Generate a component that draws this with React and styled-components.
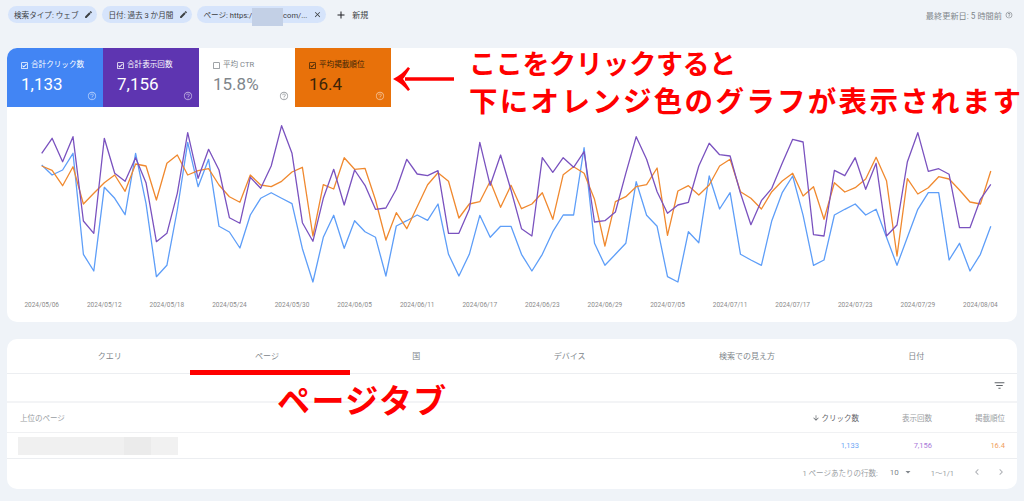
import React from "react";
import styled, { createGlobalStyle } from "styled-components";
import {
  MdEdit,
  MdClose,
  MdAdd,
  MdHelpOutline,
  MdOutlineCheckBox,
  MdOutlineCheckBoxOutlineBlank,
  MdFilterList,
  MdArrowDownward,
  MdArrowDropDown,
  MdChevronLeft,
  MdChevronRight,
} from "react-icons/md";

const FONT = `Roboto, "Noto Sans CJK JP", sans-serif`;

// daily values, already in chart pixels (zoomed by 3 from the plot top)
const CLICKS = [165,195,180,130,433,483,232,265,314,130,280,500,466,300,97,230,148,349,366,414,315,265,248,265,281,416,516,382,316,415,332,365,382,498,348,332,315,331,282,433,498,433,316,382,349,349,433,483,433,365,315,315,113,400,466,433,400,215,316,349,500,516,365,398,198,297,248,433,450,466,332,248,198,316,466,450,315,298,282,315,298,382,466,382,298,248,248,450,400,483,433,349];
const IMPRESSIONS = [130,85,155,80,333,370,85,190,214,143,218,395,370,250,68,205,118,180,323,340,202,235,168,47,130,338,394,265,178,285,180,226,298,294,238,148,192,197,182,370,370,298,97,226,135,240,356,378,143,187,143,172,125,336,332,306,190,80,148,245,310,285,277,168,100,134,138,250,344,272,235,160,88,96,374,378,181,197,143,238,160,378,345,155,68,184,176,193,353,353,268,223];
const POSITION = [168,181,227,170,282,250,218,195,244,162,168,270,160,135,195,182,176,225,260,277,195,225,230,214,186,172,378,224,237,143,178,175,270,390,308,356,290,224,188,214,324,282,275,214,292,226,296,282,248,328,194,170,190,268,408,275,260,230,224,174,376,243,227,255,225,168,148,245,265,297,245,213,190,258,230,328,218,246,233,207,142,212,438,206,252,233,200,207,240,276,282,183];

const DATES = ["2024/05/06","2024/05/12","2024/05/18","2024/05/24","2024/05/30","2024/06/05","2024/06/11","2024/06/17","2024/06/23","2024/06/29","2024/07/05","2024/07/11","2024/07/17","2024/07/23","2024/07/29","2024/08/04"];

const STEP = 10.43;
const toPoints = (values) =>
  values.map((v, i) => `${(41.7 + STEP * i).toFixed(1)},${(110 + v / 3).toFixed(1)}`).join(" ");

const METRICS = [
  { label: "合計クリック数", value: "1,133", bg: "#4285f4", fg: "#fff", soft: "rgba(255,255,255,.55)", checked: true },
  { label: "合計表示回数", value: "7,156", bg: "#5e35b1", fg: "#fff", soft: "rgba(255,255,255,.55)", checked: true },
  { label: "平均 CTR", value: "15.8%", bg: "#fff", fg: "#80868b", soft: "#a0a4a8", checked: false },
  { label: "平均掲載順位", value: "16.4", bg: "#e8710a", fg: "#3c2408", soft: "rgba(255,255,255,.5)", checked: true },
];

const TABS = ["クエリ", "ページ", "国", "デバイス", "検索での見え方", "日付"];

const App = () => (
  <Page>
    <GlobalStyle />
    <Toolbar>
      <Chip>
        検索タイプ: ウェブ
        <MdEdit size={9} color="#3c4043" />
      </Chip>
      <Chip>
        日付: 過去 3 か月間
        <MdEdit size={9} color="#3c4043" />
      </Chip>
      <Chip>
        <span>
          ページ: https:/
          <HiddenUrl />
          com/...
        </span>
        <MdClose size={9} color="#3c4043" />
      </Chip>
      <NewFilter>
        <MdAdd size={12} color="#202124" />
        新規
      </NewFilter>
      <Updated>
        最終更新日: 5 時間前
        <MdHelpOutline size={8} />
      </Updated>
    </Toolbar>

    <ChartCard>
      <Tiles>
        {METRICS.map((m) => (
          <Tile key={m.label} $bg={m.bg} $fg={m.fg}>
            <TileLabel>
              {m.checked ? (
                <MdOutlineCheckBox size={9} />
              ) : (
                <MdOutlineCheckBoxOutlineBlank size={9} />
              )}
              {m.label}
            </TileLabel>
            <TileValue>{m.value}</TileValue>
            <TileHelp $soft={m.soft}>
              <MdHelpOutline size={10} />
            </TileHelp>
          </Tile>
        ))}
      </Tiles>
      <Chart viewBox="7 107 1010 215">
        <polyline points={toPoints(CLICKS)} stroke="#5e9ef8" />
        <polyline points={toPoints(POSITION)} stroke="#f0892f" />
        <polyline points={toPoints(IMPRESSIONS)} stroke="#7a52bf" />
        {DATES.map((d, i) => (
          <AxisLabel key={d} x={41.7 + STEP * 6 * i} y={307}>
            {d}
          </AxisLabel>
        ))}
      </Chart>
    </ChartCard>

    <TableCard>
      <TabBar>
        {TABS.map((t) => (
          <Tab key={t}>{t}</Tab>
        ))}
      </TabBar>
      <FilterRow>
        <MdFilterList size={13} color="#5f6368" />
      </FilterRow>
      <HeadRow>
        <span>上位のページ</span>
        <SortedHead>
          <MdArrowDownward size={8} />
          クリック数
        </SortedHead>
        <NumHead>表示回数</NumHead>
        <NumHead>掲載順位</NumHead>
      </HeadRow>
      <BodyRow>
        <BlurredUrl />
        <Num $color="#6ba5f5">1,133</Num>
        <Num $color="#a878d8">7,156</Num>
        <Num $color="#f0a060">16.4</Num>
      </BodyRow>
      <Pagination>
        <span>1 ページあたりの行数:</span>
        <PageSize>
          10
          <MdArrowDropDown size={12} />
        </PageSize>
        <PageRange>1〜1/1</PageRange>
        <PageArrows>
          <MdChevronLeft size={12} />
          <MdChevronRight size={12} />
        </PageArrows>
      </Pagination>
    </TableCard>

    {/* red notes written on top of the report */}
    <NoteArrow width="62" height="26" viewBox="0 0 62 26">
      <path d="M61 11.2H12V14.8H61Z" fill="#f00" />
      <path d="M0 13C6 10 11 6 15 1L17 2.5C14 7 12 10.5 10 13C12 15.5 14 19 17 23.5L15 25C11 20 6 16 0 13Z" fill="#f00" />
    </NoteArrow>
    <ClickNote>
      <NoteLine $size={27} $spacing={-0.3}>ここをクリックすると</NoteLine>
      <NoteLine $size={28.5} $spacing={2.3}>下にオレンジ色のグラフが表示されます</NoteLine>
    </ClickNote>
    <TabUnderline />
    <TabNote>ページタブ</TabNote>
  </Page>
);

const GlobalStyle = createGlobalStyle`
  html, body {
    margin: 0;
    background: #eff3f8;
    font-family: ${FONT};
  }
`;

const Page = styled.div`
  position: relative;
  box-sizing: border-box;
  width: 1024px;
  height: 501px;
  overflow: hidden;
  padding: 6px 7px 0 7px;
  display: flex;
  flex-direction: column;
`;

const Toolbar = styled.div`
  display: flex;
  align-items: center;
  gap: 5px;
  height: 17px;
  padding-left: 1px;
`;

const Chip = styled.div`
  display: flex;
  align-items: center;
  gap: 6px;
  height: 17px;
  padding: 0 4px 0 6px;
  border-radius: 9px;
  background: #d6e4fb;
  color: #3c4043;
  font-size: 7.6px;
  white-space: nowrap;
`;

const HiddenUrl = styled.span`
  display: inline-block;
  width: 31px;
  height: 18px;
  margin: -4px 0 -6px;
  vertical-align: middle;
  background: #c3d0e6;
`;

const NewFilter = styled.div`
  display: flex;
  align-items: center;
  gap: 5px;
  margin-left: 4px;
  color: #3c4043;
  font-size: 8px;
`;

const Updated = styled.div`
  display: flex;
  align-items: center;
  gap: 3px;
  margin-left: auto;
  margin-right: 4px;
  color: #80868b;
  font-size: 8.2px;
`;

const ChartCard = styled.section`
  margin-top: 25px;
  height: 274px;
  background: #fff;
  border-radius: 10px;
  overflow: hidden;
`;

const Tiles = styled.div`
  display: flex;
  height: 59px;
`;

const Tile = styled.div`
  position: relative;
  box-sizing: border-box;
  width: 96px;
  padding: 12px 0 0 13px;
  background: ${(p) => p.$bg};
  color: ${(p) => p.$fg};
`;

const TileLabel = styled.div`
  display: flex;
  align-items: center;
  gap: 2px;
  font-size: 7.6px;
  line-height: 10px;
`;

const TileValue = styled.div`
  margin-top: 4px;
  margin-left: 1px;
  font-size: 17px;
  line-height: 20px;
`;

const TileHelp = styled.span`
  position: absolute;
  right: 6px;
  bottom: 6px;
  display: flex;
  color: ${(p) => p.$soft};
`;

const Chart = styled.svg`
  display: block;
  width: 1010px;
  height: 215px;

  polyline {
    fill: none;
    stroke-width: 1.3;
    stroke-linejoin: round;
  }
`;

const AxisLabel = styled.text`
  font-family: ${FONT};
  font-size: 6.5px;
  fill: #8a8a8a;
  text-anchor: middle;
`;

const TableCard = styled.section`
  margin-top: 17px;
  height: 150px;
  background: #fff;
  border-radius: 10px;
  overflow: hidden;
  display: flex;
  flex-direction: column;
`;

const TabBar = styled.div`
  display: flex;
  height: 34px;
  padding: 0 26px 0 24px;
  border-bottom: 1px solid #eceef1;
`;

const Tab = styled.div`
  flex: 1 1 auto;
  display: flex;
  align-items: center;
  justify-content: center;
  padding-bottom: 2px;
  color: #80868b;
  font-size: 8px;
`;

const FilterRow = styled.div`
  box-sizing: border-box;
  display: flex;
  align-items: center;
  justify-content: flex-end;
  height: 29px;
  padding: 0 11px 5px 0;
  border-bottom: 2px solid #f3f4f6;
`;

const tableColumns = `
  display: grid;
  grid-template-columns: 1fr 73px 73px 73px;
  align-items: center;
  padding: 0 12px 0 13px;
`;

const HeadRow = styled.div`
  ${tableColumns}
  height: 29px;
  color: #9a9ea3;
  font-size: 7.5px;
  border-bottom: 1px solid #f0f1f3;
`;

const NumHead = styled.span`
  text-align: right;
`;

const SortedHead = styled(NumHead)`
  display: flex;
  align-items: center;
  justify-content: flex-end;
  gap: 2px;
  color: #5f6368;
`;

const BodyRow = styled.div`
  ${tableColumns}
  height: 25px;
  border-bottom: 1px solid #eceef1;
`;

const BlurredUrl = styled.div`
  width: 160px;
  height: 18px;
  margin-left: -2px;
  background: linear-gradient(90deg, #f0f0f0 0 66%, #ebebeb 66% 83%, #f1f1f1 83%);
`;

const Num = styled.span`
  text-align: right;
  color: ${(p) => p.$color};
  font-size: 7.5px;
`;

const Pagination = styled.div`
  box-sizing: border-box;
  display: flex;
  align-items: center;
  justify-content: flex-end;
  flex: 1;
  padding: 0 10px 4px 0;
  color: #9a9ea3;
  font-size: 7.5px;
`;

const PageSize = styled.span`
  display: flex;
  align-items: center;
  gap: 3px;
  margin-left: 12px;
  color: #80868b;
  font-size: 8px;
`;

const PageRange = styled.span`
  margin-left: 17px;
`;

const PageArrows = styled.span`
  display: flex;
  gap: 12px;
  margin-left: 17px;
  color: #b0b3b7;
`;

const NoteArrow = styled.svg`
  position: absolute;
  left: 393px;
  top: 66px;
`;

const ClickNote = styled.div`
  position: absolute;
  left: 469px;
  top: 44px;
  color: #f00;
  font-family: "Noto Sans CJK JP", sans-serif;
  font-weight: 700;
  line-height: 37px;
  white-space: nowrap;
`;

const NoteLine = styled.div`
  font-size: ${(p) => p.$size}px;
  letter-spacing: ${(p) => p.$spacing}px;
`;

const TabUnderline = styled.div`
  position: absolute;
  left: 190px;
  top: 370px;
  width: 160px;
  height: 5px;
  background: #f00;
`;

const TabNote = styled.div`
  position: absolute;
  left: 277px;
  top: 378px;
  color: #f00;
  font-family: "Noto Sans CJK JP", sans-serif;
  font-weight: 700;
  font-size: 33px;
  letter-spacing: 1.4px;
  line-height: 42px;
  white-space: nowrap;
`;

export default App;
